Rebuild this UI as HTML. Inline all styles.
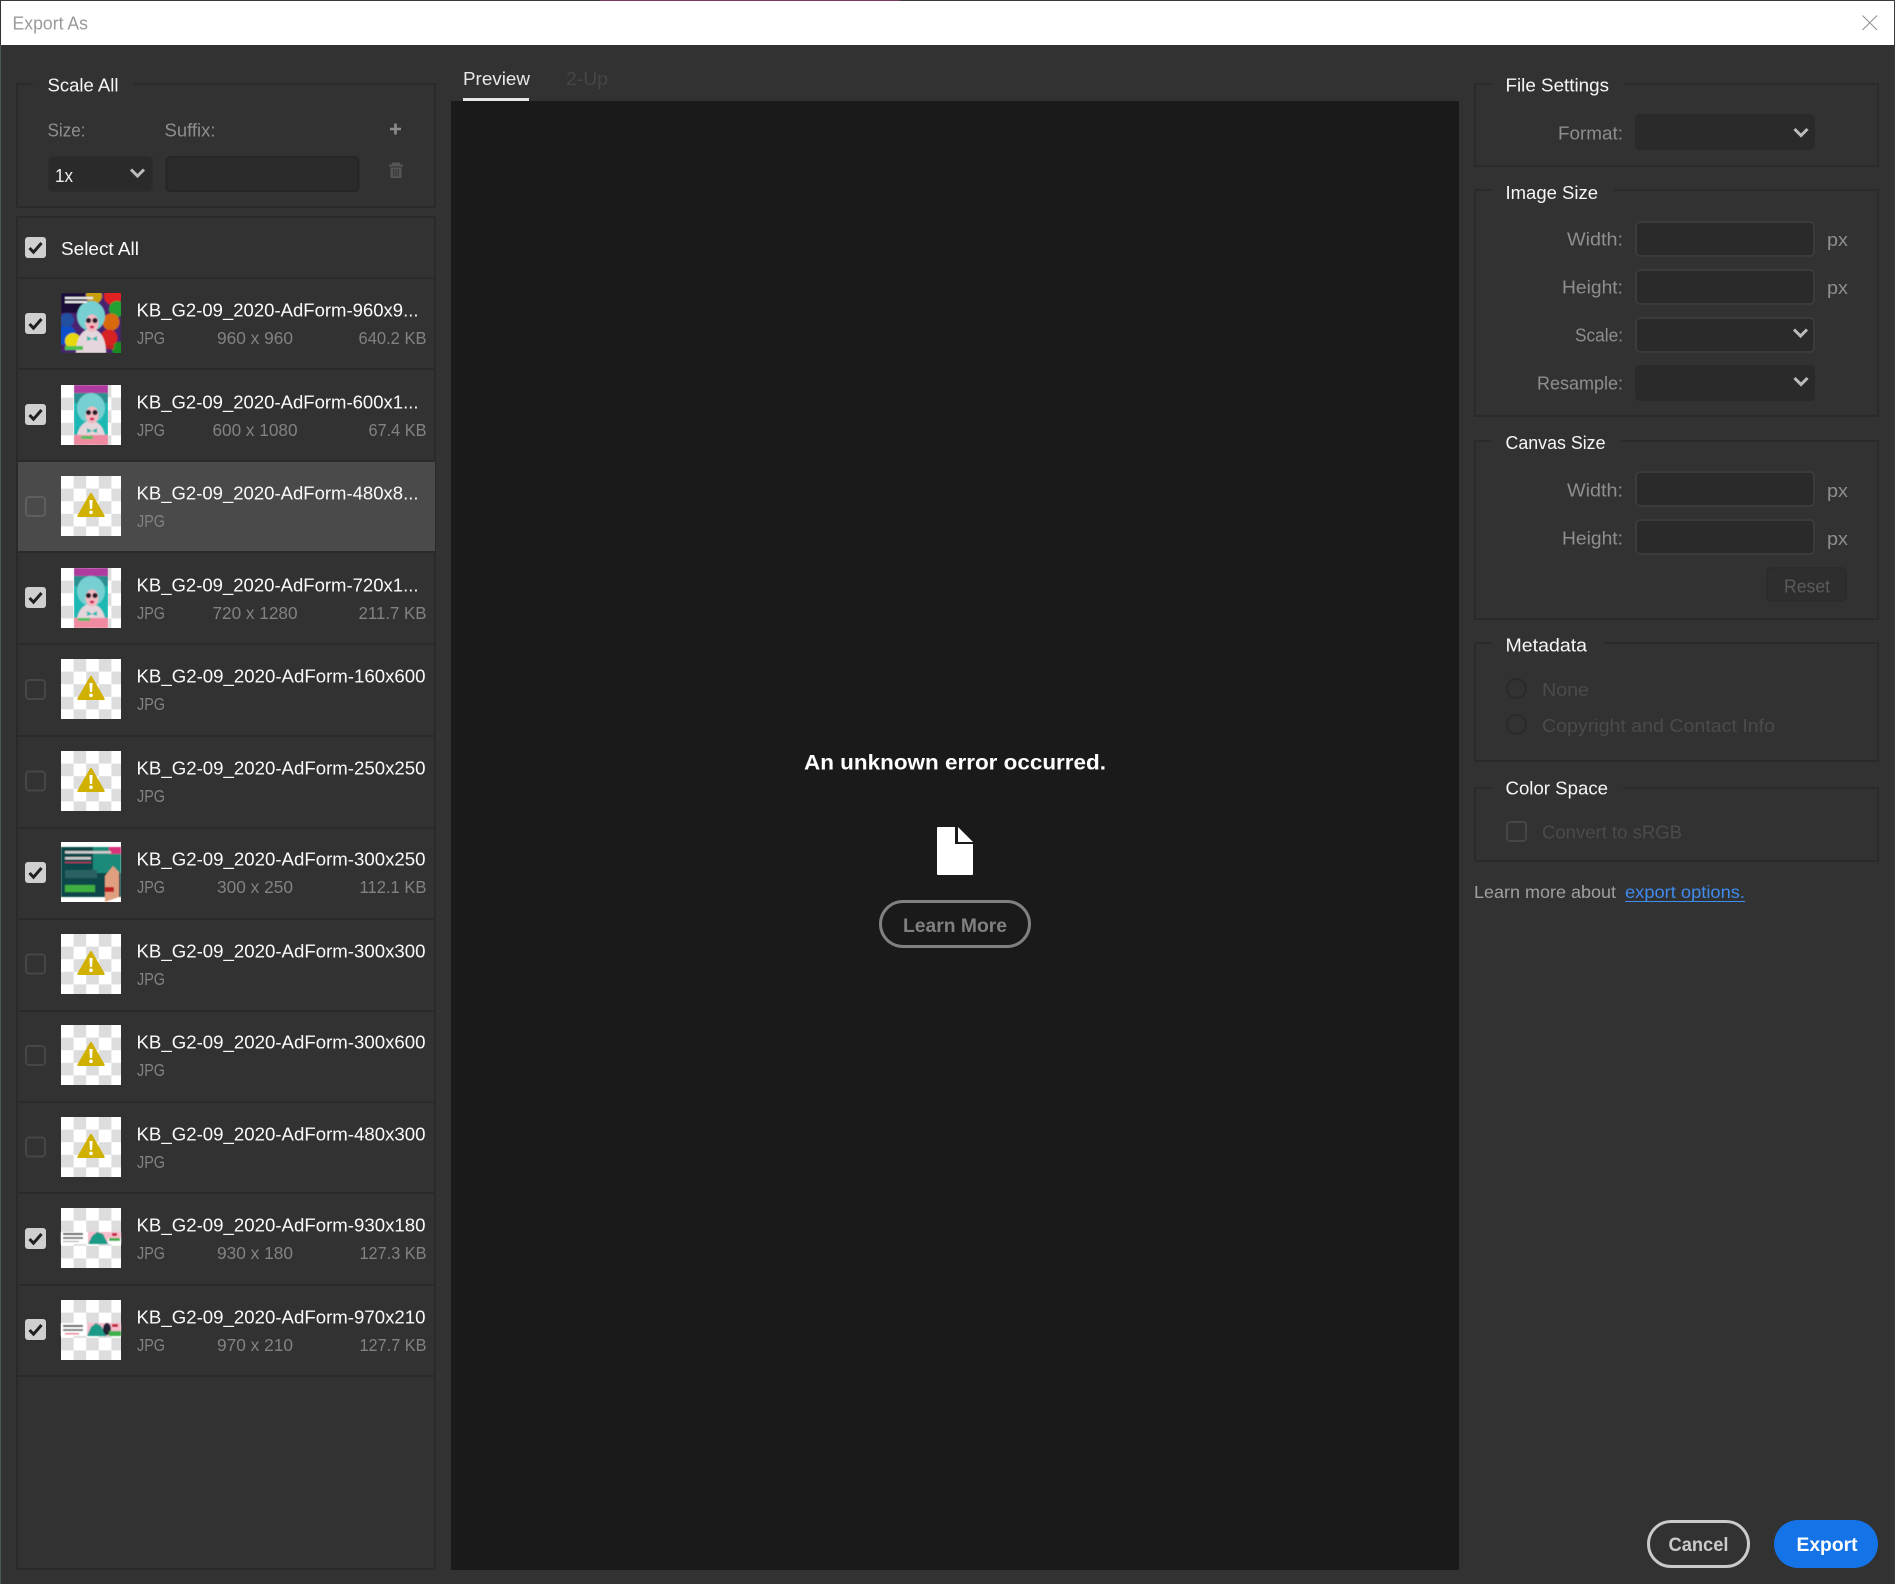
<!DOCTYPE html>
<html lang="en"><head><meta charset="utf-8"><title>Export As</title>
<style>
html,body{margin:0;padding:0;background:#323232;width:1895px;height:1584px;overflow:hidden}
svg{display:block}
text{font-family:"Liberation Sans",sans-serif;font-size:18.5px;white-space:pre}
.h{fill:#f6f6f6}
.l{fill:#8e8e8e}
.n{fill:#fafafa}
.m{fill:#828282;font-size:17.5px}
.d{fill:#4b4b4b}
.b{font-weight:bold}
</style></head><body>
<svg xmlns="http://www.w3.org/2000/svg" width="1895" height="1584" viewBox="0 0 1895 1584">
<defs>
<filter id="bl" x="-5%" y="-5%" width="110%" height="110%"><feGaussianBlur stdDeviation="0.55"/></filter>
<pattern id="ck" width="25.2" height="25.2" patternUnits="userSpaceOnUse"><rect width="25.2" height="25.2" fill="#fff"/><rect x="12.6" width="12.6" height="12.6" fill="#ddd"/><rect y="12.6" width="12.6" height="12.6" fill="#ddd"/></pattern>
<symbol id="cb" viewBox="0 0 21 21" overflow="visible"><rect width="21" height="21" rx="3" fill="#cfcfcf"/><path d="M4.5 11l4 4.2L16.5 6" fill="none" stroke="#1f1f1f" stroke-width="3"/></symbol>
<symbol id="ub" viewBox="0 0 21 21" overflow="visible"><rect x="1" y="1" width="19" height="19" rx="3" fill="none" stroke="#464646" stroke-width="2"/></symbol>
<g id="warn"><rect width="60" height="60" fill="url(#ck)"/><path d="M29 17.5a1.2 1.2 0 0 1 2 0l12.6 22a1 1 0 0 1-.9 1.5H17.3a1 1 0 0 1-.9-1.5z" fill="#d0b000"/><path d="M28.4 24h3.200l-.5 9h-2.200z" fill="#fff"/><circle cx="30" cy="36.300" r="1.800" fill="#fff"/></g>
<g id="girl"><ellipse cx="30" cy="23" rx="14" ry="15" fill="#76cfd0"/><path d="M15 60c0-15 6-24 15-24s15 9 15 24z" fill="#e4d6dc"/><ellipse cx="31" cy="30" rx="6.500" ry="8.500" fill="#f2b8c0"/><circle cx="27.500" cy="27.500" r="2.600" fill="#2a1a2c"/><circle cx="34" cy="27.500" r="2.600" fill="#2a1a2c"/><ellipse cx="31" cy="34" rx="2.200" ry="1.500" fill="#d0205a"/><path d="M26 43l5 3 5-3v5l-5-2-5 2z" fill="#2fb5a8"/></g>
<clipPath id="c34"><rect x="13" width="34" height="60"/></clipPath>
<clipPath id="c60"><rect width="60" height="60"/></clipPath>
</defs>

<rect width="1895" height="1584" fill="#323232"/>
<!-- title bar -->
<rect width="1895" height="1" fill="#3a3a3a"/>
<rect x="600" width="300" height="1" fill="#7a3a60"/>
<rect x="0" y="45" width="1" height="1539" fill="#4a5a50"/>
<rect x="1" y="1" width="1893" height="44" fill="#fff"/>
<rect x="1894" y="0" width="1" height="1584" fill="#3a3a3a"/>
<text x="12.500" y="29.500" textLength="75.500" lengthAdjust="spacingAndGlyphs" fill="#9a9a9a">Export As</text>
<path d="M1862.500 15.500l14.500 14.500M1877 15.500l-14.500 14.500" stroke="#8f8f8f" stroke-width="1" fill="none"/>

<!-- scale all -->
<rect x="17" y="84" width="418" height="123" fill="none" stroke="#2a2a2a" stroke-width="2"/>
<rect x="33" y="80" width="101" height="8" fill="#323232"/>
<text class="h" x="47.500" y="91.500" textLength="71" lengthAdjust="spacingAndGlyphs">Scale All</text>
<text class="l" x="47.500" y="136.500" textLength="38" lengthAdjust="spacingAndGlyphs">Size:</text>
<text class="l" x="164.500" y="136.500" textLength="51" lengthAdjust="spacingAndGlyphs">Suffix:</text>
<path d="M395.500 123.500v11M390 129h11" stroke="#8c8c8c" stroke-width="2.600" fill="none"/>
<path d="M389 165.500h14M393 165v-1.500h6v1.500" fill="none" stroke="#555" stroke-width="2"/><path d="M390.500 167.500h11v10.500h-11z" fill="#555"/><path d="M393.800 169v7.500M396 169v7.500M398.200 169v7.500" stroke="#323232" stroke-width="1"/>
<rect x="49" y="157" width="103" height="34" rx="4" fill="#2a2a2a" stroke="#2c2c2c" stroke-width="2"/>
<text x="55" y="182" textLength="18" lengthAdjust="spacingAndGlyphs" fill="#f0f0f0">1x</text>
<path d="M131 169.500l6.500 6.500 6.500-6.500" fill="none" stroke="#bcbcbc" stroke-width="3"/>
<rect x="166.500" y="157" width="192" height="34" rx="4" fill="#2b2b2b" stroke="#262626" stroke-width="2"/>

<!-- list -->
<rect x="17" y="217" width="418" height="1352" fill="none" stroke="#2a2a2a" stroke-width="2"/>
<rect x="18" y="277" width="416" height="2" fill="#2a2a2a"/>
<use href="#cb" x="25" y="237" width="21" height="21"/>
<text class="n" x="61" y="255" textLength="78" lengthAdjust="spacingAndGlyphs">Select All</text>
<g fill="#2a2a2a">
<rect x="18" y="368" width="416" height="2"/><rect x="18" y="460" width="416" height="2"/><rect x="18" y="551" width="416" height="2"/><rect x="18" y="643" width="416" height="2"/><rect x="18" y="735" width="416" height="2"/><rect x="18" y="827" width="416" height="2"/><rect x="18" y="918" width="416" height="2"/><rect x="18" y="1010" width="416" height="2"/><rect x="18" y="1101" width="416" height="2"/><rect x="18" y="1192" width="416" height="2"/><rect x="18" y="1284" width="416" height="2"/><rect x="18" y="1375" width="416" height="2"/>
</g>
<rect x="18" y="462" width="417" height="89" fill="#4a4a4a"/>

<!-- row 1 -->
<g transform="translate(0,293)">
<use href="#cb" x="25" y="20" width="21" height="21"/>
<g transform="translate(61,0)" clip-path="url(#c60)"><g filter="url(#bl)"><rect width="60" height="60" fill="#4a2270"/><rect width="24" height="20" fill="#1c1038"/><circle cx="52" cy="3" r="9" fill="#e02020"/><circle cx="33" cy="3" r="8" fill="#c8a010"/><circle cx="56" cy="16" r="8" fill="#22a030"/><circle cx="50" cy="29" r="8.500" fill="#d86a10"/><circle cx="48" cy="45" r="8.500" fill="#d82020"/><circle cx="5" cy="42" r="10" fill="#1050c8"/><circle cx="12" cy="48" r="8" fill="#e8d810"/><circle cx="6" cy="27" r="7" fill="#2050a0"/><circle cx="58" cy="56" r="7" fill="#1a8a20"/><use href="#girl"/><rect x="4" y="53" width="18" height="4" fill="#50c050"/><rect x="4" y="4" width="28" height="2" fill="#eee"/><rect x="4" y="8" width="22" height="2" fill="#eee"/><rect x="45" y="52" width="8" height="4" fill="#c02020"/></g></g>
<text class="n" x="136.500" y="23.500" textLength="282" lengthAdjust="spacingAndGlyphs">KB_G2-09_2020-AdForm-960x9...</text>
<text class="m" x="137" y="51" textLength="28" lengthAdjust="spacingAndGlyphs">JPG</text>
<text class="m" x="217" y="51" textLength="76" lengthAdjust="spacingAndGlyphs">960 x 960</text>
<text class="m" x="358.500" y="51" textLength="68" lengthAdjust="spacingAndGlyphs">640.2 KB</text>
</g>
<!-- row 2 -->
<g transform="translate(0,385)">
<use href="#cb" x="25" y="19" width="21" height="21"/>
<g transform="translate(61,0)"><rect width="60" height="60" fill="url(#ck)"/><g clip-path="url(#c34)"><g filter="url(#bl)"><rect x="13" width="34" height="60" fill="#1fb8b4"/><rect x="13" width="34" height="8" fill="#b03aa0"/><rect x="13" y="8" width="34" height="10" fill="#2a8f90"/><use href="#girl"/><rect x="13" y="50" width="34" height="10" fill="#f08aa0"/><rect x="20" y="51" width="12" height="3" fill="#50c060"/></g></g></g>
<text class="n" x="136.500" y="23.500" textLength="282" lengthAdjust="spacingAndGlyphs">KB_G2-09_2020-AdForm-600x1...</text>
<text class="m" x="137" y="51" textLength="28" lengthAdjust="spacingAndGlyphs">JPG</text>
<text class="m" x="212.500" y="51" textLength="85" lengthAdjust="spacingAndGlyphs">600 x 1080</text>
<text class="m" x="368.500" y="51" textLength="58" lengthAdjust="spacingAndGlyphs">67.4 KB</text>
</g>
<!-- row 3 -->
<g transform="translate(0,476)">
<rect x="26" y="21" width="19" height="19" rx="3" fill="none" stroke="#5e5e5e" stroke-width="2"/>
<use href="#warn" x="61"/>
<text class="n" x="136.500" y="23.500" textLength="282" lengthAdjust="spacingAndGlyphs">KB_G2-09_2020-AdForm-480x8...</text>
<text class="m" x="137" y="51" textLength="28" lengthAdjust="spacingAndGlyphs">JPG</text>
</g>
<!-- row 4 -->
<g transform="translate(0,568)">
<use href="#cb" x="25" y="19" width="21" height="21"/>
<g transform="translate(61,0)"><rect width="60" height="60" fill="url(#ck)"/><g clip-path="url(#c34)"><g filter="url(#bl)"><rect x="13" width="34" height="60" fill="#1fb8b4"/><rect x="13" width="34" height="8" fill="#b03aa0"/><rect x="13" y="8" width="34" height="10" fill="#2a8f90"/><use href="#girl"/><rect x="13" y="50" width="34" height="10" fill="#f08aa0"/><rect x="17" y="50" width="12" height="3" fill="#50c060"/></g></g></g>
<text class="n" x="136.500" y="23.500" textLength="282" lengthAdjust="spacingAndGlyphs">KB_G2-09_2020-AdForm-720x1...</text>
<text class="m" x="137" y="51" textLength="28" lengthAdjust="spacingAndGlyphs">JPG</text>
<text class="m" x="212.500" y="51" textLength="85" lengthAdjust="spacingAndGlyphs">720 x 1280</text>
<text class="m" x="358.500" y="51" textLength="68" lengthAdjust="spacingAndGlyphs">211.7 KB</text>
</g>
<!-- row 5 -->
<g transform="translate(0,659)">
<use href="#ub" x="25" y="20" width="21" height="21"/>
<use href="#warn" x="61"/>
<text class="n" x="136.500" y="23.500" textLength="289" lengthAdjust="spacingAndGlyphs">KB_G2-09_2020-AdForm-160x600</text>
<text class="m" x="137" y="51" textLength="28" lengthAdjust="spacingAndGlyphs">JPG</text>
</g>
<!-- row 6 -->
<g transform="translate(0,751)">
<use href="#ub" x="25" y="19.500" width="21" height="21"/>
<use href="#warn" x="61"/>
<text class="n" x="136.500" y="23.500" textLength="289" lengthAdjust="spacingAndGlyphs">KB_G2-09_2020-AdForm-250x250</text>
<text class="m" x="137" y="51" textLength="28" lengthAdjust="spacingAndGlyphs">JPG</text>
</g>
<!-- row 7 -->
<g transform="translate(0,842)">
<use href="#cb" x="25" y="20" width="21" height="21"/>
<g transform="translate(61,0)"><rect width="60" height="60" fill="#fff"/><g filter="url(#bl)"><rect y="5" width="60" height="50" fill="#0f4648"/><rect x="32" y="5" width="28" height="26" fill="#1a8a7a"/><rect x="48" y="5" width="12" height="7" fill="#d8307a"/><rect x="4" y="9" width="46" height="2.500" fill="#ccc"/><rect x="4" y="15" width="26" height="2.500" fill="#ccc"/><rect x="4" y="20" width="26" height="1" fill="#d02060"/><path d="M44 60V34l8-10 6 6v25z" fill="#e0a080"/><rect x="4" y="28" width="32" height="8" fill="#2a6060"/><rect x="4" y="43" width="30" height="7" fill="#40b040"/><rect x="44" y="45" width="9" height="5" fill="#c02020"/></g></g>
<text class="n" x="136.500" y="23.500" textLength="289" lengthAdjust="spacingAndGlyphs">KB_G2-09_2020-AdForm-300x250</text>
<text class="m" x="137" y="51" textLength="28" lengthAdjust="spacingAndGlyphs">JPG</text>
<text class="m" x="217" y="51" textLength="76" lengthAdjust="spacingAndGlyphs">300 x 250</text>
<text class="m" x="359.500" y="51" textLength="67" lengthAdjust="spacingAndGlyphs">112.1 KB</text>
</g>
<!-- row 8 -->
<g transform="translate(0,934)">
<use href="#ub" x="25" y="19.500" width="21" height="21"/>
<use href="#warn" x="61"/>
<text class="n" x="136.500" y="23.500" textLength="289" lengthAdjust="spacingAndGlyphs">KB_G2-09_2020-AdForm-300x300</text>
<text class="m" x="137" y="51" textLength="28" lengthAdjust="spacingAndGlyphs">JPG</text>
</g>
<!-- row 9 -->
<g transform="translate(0,1025)">
<use href="#ub" x="25" y="20" width="21" height="21"/>
<use href="#warn" x="61"/>
<text class="n" x="136.500" y="23.500" textLength="289" lengthAdjust="spacingAndGlyphs">KB_G2-09_2020-AdForm-300x600</text>
<text class="m" x="137" y="51" textLength="28" lengthAdjust="spacingAndGlyphs">JPG</text>
</g>
<!-- row 10 -->
<g transform="translate(0,1117)">
<use href="#ub" x="25" y="19.500" width="21" height="21"/>
<use href="#warn" x="61"/>
<text class="n" x="136.500" y="23.500" textLength="289" lengthAdjust="spacingAndGlyphs">KB_G2-09_2020-AdForm-480x300</text>
<text class="m" x="137" y="51" textLength="28" lengthAdjust="spacingAndGlyphs">JPG</text>
</g>
<!-- row 11 -->
<g transform="translate(0,1208)">
<use href="#cb" x="25" y="20" width="21" height="21"/>
<g transform="translate(61,0)"><rect width="60" height="60" fill="url(#ck)"/><g filter="url(#bl)"><rect y="24" width="60" height="12" fill="#fff"/><rect x="2" y="25" width="20" height="2" fill="#555"/><rect x="2" y="29" width="20" height="2" fill="#777"/><rect x="2" y="33" width="16" height="1" fill="#999"/><rect x="27" y="24" width="33" height="12" fill="#f6bccb"/><path d="M27 36l4-8 5-4 6 2 5 10z" fill="#1c9a88"/><rect x="47" y="30" width="13" height="6" fill="#fff"/><rect x="48" y="30" width="11" height="3" fill="#40b050"/><rect x="51" y="25" width="5" height="3" fill="#c02040"/></g></g>
<text class="n" x="136.500" y="23.500" textLength="289" lengthAdjust="spacingAndGlyphs">KB_G2-09_2020-AdForm-930x180</text>
<text class="m" x="137" y="51" textLength="28" lengthAdjust="spacingAndGlyphs">JPG</text>
<text class="m" x="217" y="51" textLength="76" lengthAdjust="spacingAndGlyphs">930 x 180</text>
<text class="m" x="359.500" y="51" textLength="67" lengthAdjust="spacingAndGlyphs">127.3 KB</text>
</g>
<!-- row 12 -->
<g transform="translate(0,1300)">
<use href="#cb" x="25" y="19" width="21" height="21"/>
<g transform="translate(61,0)"><rect width="60" height="60" fill="url(#ck)"/><g filter="url(#bl)"><rect y="23" width="60" height="13" fill="#fff"/><rect x="2" y="25" width="20" height="2" fill="#555"/><rect x="2" y="29" width="20" height="2" fill="#777"/><rect x="4" y="33" width="14" height="1.500" fill="#e86a90"/><rect x="26" y="23" width="34" height="13" fill="#f6bccb"/><path d="M26 36l4-9 5-4 5 3 6 10z" fill="#1c9a88"/><ellipse cx="46" cy="29" rx="4" ry="6" fill="#223"/><rect x="48" y="31" width="12" height="5" fill="#40b050"/><rect x="51" y="24" width="6" height="3" fill="#c02040"/></g></g>
<text class="n" x="136.500" y="23.500" textLength="289" lengthAdjust="spacingAndGlyphs">KB_G2-09_2020-AdForm-970x210</text>
<text class="m" x="137" y="51" textLength="28" lengthAdjust="spacingAndGlyphs">JPG</text>
<text class="m" x="217" y="51" textLength="76" lengthAdjust="spacingAndGlyphs">970 x 210</text>
<text class="m" x="359.500" y="51" textLength="67" lengthAdjust="spacingAndGlyphs">127.7 KB</text>
</g>

<!-- preview -->
<rect x="451" y="101" width="1008" height="1469" fill="#1a1a1a"/>
<text x="463" y="85" textLength="67" lengthAdjust="spacingAndGlyphs" fill="#e8e8e8">Preview</text>
<rect x="463" y="98" width="66" height="3" fill="#e6e6e6"/>
<text x="566" y="85" textLength="42" lengthAdjust="spacingAndGlyphs" fill="#464646">2-Up</text>
<text class="b" x="804" y="769.500" textLength="302" lengthAdjust="spacingAndGlyphs" fill="#fff" style="font-size:21.500px">An unknown error occurred.</text>
<path d="M937 828a1 1 0 0 1 1-1h17v17h18v30a1 1 0 0 1-1 1h-34a1 1 0 0 1-1-1z" fill="#fff"/>
<path d="M958 827l15 15h-15z" fill="#fff"/>
<rect x="880.500" y="901.500" width="149" height="45" rx="22.500" fill="none" stroke="#808080" stroke-width="3"/>
<text class="b" x="903" y="932" textLength="104" lengthAdjust="spacingAndGlyphs" fill="#808080" style="font-size:19px">Learn More</text>

<!-- file settings -->
<rect x="1475" y="84" width="403" height="82" fill="none" stroke="#2a2a2a" stroke-width="2"/>
<rect x="1491" y="80" width="133" height="8" fill="#323232"/>
<text class="h" x="1505.500" y="91.500" textLength="103.500" lengthAdjust="spacingAndGlyphs">File Settings</text>
<text class="l" x="1558" y="139.500" textLength="65" lengthAdjust="spacingAndGlyphs">Format:</text>
<rect x="1635" y="114" width="180" height="36" rx="5" fill="#2a2a2a"/>
<path d="M1794.500 129l6.500 6.500 6.500-6.500" fill="none" stroke="#bcbcbc" stroke-width="3"/>

<!-- image size -->
<rect x="1475" y="190" width="403" height="226" fill="none" stroke="#2a2a2a" stroke-width="2"/>
<rect x="1491" y="186" width="123" height="8" fill="#323232"/>
<text class="h" x="1505.500" y="199" textLength="92.500" lengthAdjust="spacingAndGlyphs">Image Size</text>
<text class="l" x="1567" y="245.500" textLength="56" lengthAdjust="spacingAndGlyphs">Width:</text>
<text class="l" x="1562" y="293.500" textLength="61" lengthAdjust="spacingAndGlyphs">Height:</text>
<text class="l" x="1575" y="341.500" textLength="48" lengthAdjust="spacingAndGlyphs">Scale:</text>
<text class="l" x="1537" y="389.500" textLength="86" lengthAdjust="spacingAndGlyphs">Resample:</text>
<text class="l" x="1827" y="246" textLength="21" lengthAdjust="spacingAndGlyphs">px</text>
<text class="l" x="1827" y="294" textLength="21" lengthAdjust="spacingAndGlyphs">px</text>
<rect x="1636" y="222" width="178" height="34" rx="4" fill="#2a2a2a" stroke="#3b3b3b" stroke-width="2"/>
<rect x="1636" y="270" width="178" height="34" rx="4" fill="#2a2a2a" stroke="#3b3b3b" stroke-width="2"/>
<rect x="1636" y="318" width="178" height="34" rx="4" fill="#2a2a2a" stroke="#3b3b3b" stroke-width="2"/>
<path d="M1794 329.500l6.500 6.500 6.500-6.500" fill="none" stroke="#bcbcbc" stroke-width="3"/>
<rect x="1635" y="365" width="180" height="36" rx="5" fill="#2a2a2a"/>
<path d="M1794.500 378l6.500 6.500 6.500-6.500" fill="none" stroke="#bcbcbc" stroke-width="3"/>

<!-- canvas size -->
<rect x="1475" y="441" width="403" height="178" fill="none" stroke="#2a2a2a" stroke-width="2"/>
<rect x="1491" y="437" width="130" height="8" fill="#323232"/>
<text class="h" x="1505.500" y="449" textLength="100" lengthAdjust="spacingAndGlyphs">Canvas Size</text>
<text class="l" x="1567" y="496.500" textLength="56" lengthAdjust="spacingAndGlyphs">Width:</text>
<text class="l" x="1562" y="544.500" textLength="61" lengthAdjust="spacingAndGlyphs">Height:</text>
<text class="l" x="1827" y="497" textLength="21" lengthAdjust="spacingAndGlyphs">px</text>
<text class="l" x="1827" y="545" textLength="21" lengthAdjust="spacingAndGlyphs">px</text>
<rect x="1636" y="472" width="178" height="34" rx="4" fill="#2a2a2a" stroke="#3b3b3b" stroke-width="2"/>
<rect x="1636" y="520" width="178" height="34" rx="4" fill="#2a2a2a" stroke="#3b3b3b" stroke-width="2"/>
<rect x="1767" y="568" width="79" height="33" rx="4" fill="#2e2e2e" stroke="#2c2c2c" stroke-width="2"/>
<text x="1784" y="592.500" textLength="46" lengthAdjust="spacingAndGlyphs" fill="#5a5a5a">Reset</text>

<!-- metadata -->
<rect x="1475" y="643" width="403" height="118" fill="none" stroke="#2a2a2a" stroke-width="2"/>
<rect x="1491" y="639" width="112" height="8" fill="#323232"/>
<text class="h" x="1505.500" y="651.500" textLength="81.500" lengthAdjust="spacingAndGlyphs">Metadata</text>
<circle cx="1516.500" cy="688.500" r="9.500" fill="none" stroke="#2a2a2a" stroke-width="2"/>
<text class="d" x="1542" y="696" textLength="47" lengthAdjust="spacingAndGlyphs">None</text>
<circle cx="1516.500" cy="724.500" r="9.500" fill="none" stroke="#2a2a2a" stroke-width="2"/>
<text class="d" x="1542" y="732" textLength="233" lengthAdjust="spacingAndGlyphs">Copyright and Contact Info</text>

<!-- color space -->
<rect x="1475" y="788" width="403" height="73" fill="none" stroke="#2a2a2a" stroke-width="2"/>
<rect x="1491" y="784" width="132" height="8" fill="#323232"/>
<text class="h" x="1505.500" y="794.500" textLength="102.500" lengthAdjust="spacingAndGlyphs">Color Space</text>
<use href="#ub" x="1506" y="821" width="21" height="21"/>
<text class="d" x="1542" y="838.500" textLength="140" lengthAdjust="spacingAndGlyphs">Convert to sRGB</text>

<text x="1474" y="898" textLength="142" lengthAdjust="spacingAndGlyphs" fill="#a0a0a0" style="font-size:17.500px">Learn more about</text>
<text x="1625" y="898" textLength="120" lengthAdjust="spacingAndGlyphs" fill="#3f8cf0" style="font-size:17.500px">export options.</text>
<rect x="1625" y="901" width="120" height="1" fill="#3f8cf0"/>

<!-- footer buttons -->
<rect x="1648.500" y="1521.500" width="100" height="45" rx="22.500" fill="none" stroke="#cacaca" stroke-width="3"/>
<text class="b" x="1668.500" y="1551" textLength="60" lengthAdjust="spacingAndGlyphs" fill="#cacaca" style="font-size:19px">Cancel</text>
<rect x="1774" y="1520" width="104" height="48" rx="24" fill="#1473e6"/>
<text class="b" x="1796.500" y="1551" textLength="61" lengthAdjust="spacingAndGlyphs" fill="#fff" style="font-size:19px">Export</text>
</svg>
</body></html>
